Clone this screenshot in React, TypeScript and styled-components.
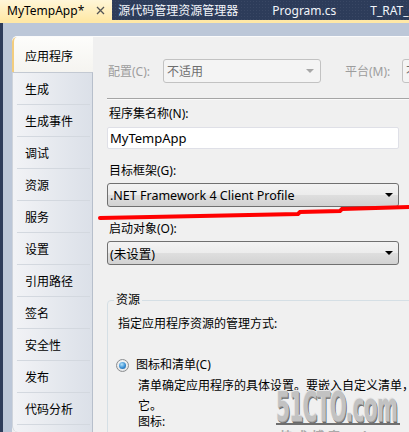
import React from 'react';
import styled, { createGlobalStyle } from 'styled-components';

const GlobalStyle = createGlobalStyle`
  html, body {
    margin: 0;
    padding: 0;
  }

  body {
    width: 409px;
    height: 432px;
    overflow: hidden;
    background: #bcc7d8;
    font-family: "Noto Sans", "Noto Sans CJK SC", sans-serif;
    font-size: 12px;
    color: #000;
  }
`;

const Window = styled.div`
  position: relative;
  display: flex;
  flex-direction: column;
  width: 409px;
  height: 432px;
  overflow: hidden;
  background: #bcc7d8;
`;

const TabBar = styled.div`
  display: flex;
  flex-shrink: 0;
  height: 20px;
  background-color: #2d3c5a;
  background-image: radial-gradient(rgba(255, 255, 255, 0.06) 1px, transparent 1px);
  background-size: 3px 3px;
`;

const DocTab = styled.div<{ $active?: boolean }>`
  display: flex;
  align-items: center;
  gap: 12px;
  height: 20px;
  padding: ${(p) => (p.$active ? '0 7px 0 7px' : '0 28px 0 6px')};
  white-space: nowrap;
  color: ${(p) => (p.$active ? '#000' : '#f2f5fa')};
  background: ${(p) =>
    p.$active ? 'linear-gradient(#fff6d8, #ffe9a8)' : 'transparent'};
`;

const ActiveStrip = styled.div`
  flex-shrink: 0;
  height: 3px;
  background: #ffe8a6;
`;

const Well = styled.div`
  display: flex;
  flex: 1;
  min-height: 0;
`;

const WellEdge = styled.div`
  width: 3px;
  flex-shrink: 0;
  background: #2d3c5a;
`;

const Page = styled.div`
  display: flex;
  flex: 1;
  min-width: 0;
  margin: 13px 0 0 9px;
  background: #f0f0f0;
  border-top: 1px solid #fbfbfb;
  border-top-left-radius: 5px;
  overflow: hidden;
`;

const Sidebar = styled.nav`
  display: flex;
  flex-direction: column;
  flex-shrink: 0;
  width: 81px;
`;

const ActiveSideTab = styled.div`
  display: flex;
  align-items: center;
  height: 35px;
  padding: 3px 0 0 11px;
  box-sizing: border-box;
  background: linear-gradient(#fdfdfb, #f5f4f0);
  border-left: 2px solid #f3cd7e;
  border-top-left-radius: 5px;
`;

const SideList = styled.div`
  display: flex;
  flex-direction: column;
  flex: 1;
  background: linear-gradient(to right, #f2f3f6, #dbe0e8);
  border-top: 1px solid #c3c9d2;
  border-left: 1px solid #cfd4dc;
  border-right: 1px solid #b7bfcb;
  border-bottom-left-radius: 6px;
`;

const SideItem = styled.div`
  position: relative;
  display: flex;
  align-items: center;
  flex-shrink: 0;
  height: 32px;
  padding-left: 12px;

  &::after {
    content: '';
    position: absolute;
    left: 4px;
    right: 2px;
    bottom: 0;
    height: 1px;
    background: #d3d8df;
  }
`;

const Content = styled.main`
  display: flex;
  flex-direction: column;
  flex: 1;
  min-width: 0;
  padding-left: 14px;
  overflow: hidden;
`;

const ConfigRow = styled.div`
  display: flex;
  align-items: center;
  flex-shrink: 0;
  margin-top: 22px;
  height: 24px;
  white-space: nowrap;
`;

const DimLabel = styled.span<{ $width: number }>`
  flex-shrink: 0;
  width: ${(p) => p.$width}px;
  padding-left: 1px;
  box-sizing: border-box;
  color: #9d9d9d;
`;

const DisabledCombo = styled.div`
  display: flex;
  align-items: center;
  justify-content: space-between;
  flex-shrink: 0;
  width: 158px;
  height: 24px;
  padding: 0 6px 0 3px;
  box-sizing: border-box;
  margin-right: 23px;
  color: #6d6d6d;
  background: #f4f4f4;
  border: 1px solid #c2c2c2;
  border-radius: 3px;
`;

const Divider = styled.hr`
  flex-shrink: 0;
  width: 100%;
  height: 0;
  margin: 15px 0 0;
  border: none;
  border-top: 1px solid #a5a5a5;
  border-bottom: 1px solid #fafafa;
`;

const FieldLabel = styled.div<{ $top: number }>`
  flex-shrink: 0;
  height: 16px;
  line-height: 16px;
  margin: ${(p) => p.$top}px 0 4px 2px;
`;

const TextBox = styled.div`
  display: flex;
  align-items: center;
  flex-shrink: 0;
  width: 292px;
  height: 22px;
  margin-top: 1px;
  padding-left: 2px;
  box-sizing: border-box;
  font-size: 13px;
  background: #fff;
  border: 1px solid #dfe0e7;
  border-radius: 2px;
`;

const Combo = styled.div`
  display: flex;
  align-items: center;
  justify-content: space-between;
  flex-shrink: 0;
  width: 292px;
  height: 24px;
  padding: 0 5px 0 2px;
  box-sizing: border-box;
  font-size: 12.5px;
  background: linear-gradient(#f3f3f3 0%, #ececec 48%, #dedede 52%, #d2d2d2 100%);
  border: 1px solid #707070;
  border-radius: 3px;
`;

const Arrow = styled.span<{ $dim?: boolean }>`
  width: 0;
  height: 0;
  border-left: 4px solid transparent;
  border-right: 4px solid transparent;
  border-top: 4px solid ${(p) => (p.$dim ? '#a7a7a7' : '#000')};
`;

const GroupBox = styled.fieldset`
  flex-shrink: 0;
  width: 430px;
  margin: 27px 0 0;
  padding: 0 0 20px 10px;
  border: 1px solid #d5dfe5;
  border-radius: 4px;
`;

const GroupLegend = styled.legend`
  height: 16px;
  line-height: 16px;
  margin-left: -4px;
  padding: 0 2px;
`;

const GroupText = styled.div`
  margin-top: 8px;
  line-height: 16px;
  white-space: nowrap;
`;

const RadioRow = styled.label`
  display: flex;
  align-items: center;
  gap: 7px;
  margin: 25px 0 0 -2px;
  line-height: 16px;
  white-space: nowrap;
`;

const RadioDot = styled.span`
  display: flex;
  align-items: center;
  justify-content: center;
  width: 11px;
  height: 11px;
  border: 1px solid #8c8e90;
  border-radius: 50%;
  background: radial-gradient(circle at 50% 40%, #ffffff, #d9dcdf);

  &::after {
    content: '';
    width: 7px;
    height: 7px;
    border-radius: 50%;
    background: radial-gradient(circle at 40% 35%, #b5e3fb, #3a8fd3 55%, #17538f);
  }
`;

const Description = styled.div`
  margin: 3px 0 0 20px;
  line-height: 20px;
  white-space: nowrap;
`;

const IconLabel = styled.div`
  margin: -2px 0 0 20px;
  line-height: 16px;
`;

const Scribble = styled.svg`
  position: absolute;
  left: 0;
  top: 0;
  pointer-events: none;
`;

const Watermark = styled.div`
  position: absolute;
  left: 276px;
  top: 392px;
  display: flex;
  flex-direction: column;
  pointer-events: none;
`;

const WatermarkLogo = styled.span`
  display: inline-block;
  height: 31px;
  font-family: "DejaVu Sans Condensed", "DejaVu Sans", sans-serif;
  font-weight: bold;
  font-size: 37px;
  line-height: 31px;
  letter-spacing: -1px;
  color: #c2c2c2;
  text-shadow: -1px -1px 0 #e6e6e6, 1px 1px 0 #9a9a9a, 2px 2px 0 #6a6a6a;
  transform: scale(0.6, 1.08);
  transform-origin: left center;
  white-space: nowrap;
`;

const WatermarkRule = styled.div`
  width: 124px;
  height: 2px;
  background: #6f6f6f;
`;

const WatermarkSub = styled.div`
  margin-top: 2px;
  padding-left: 4px;
  font-size: 12px;
  font-weight: bold;
  letter-spacing: 4px;
  color: #a9a9a9;
  white-space: nowrap;
`;

const sideItems = [
  '生成',
  '生成事件',
  '调试',
  '资源',
  '服务',
  '设置',
  '引用路径',
  '签名',
  '安全性',
  '发布',
  '代码分析',
];

const CloseIcon: React.FC = () => (
  <svg width="9" height="9" viewBox="0 0 9 9">
    <path d="M1 1 L8 8 M8 1 L1 8" stroke="#555" strokeWidth="1.3" />
  </svg>
);

const App: React.FC = () => {
  return (
    <Window>
      <GlobalStyle />
      <TabBar>
        <DocTab $active>
          MyTempApp*
          <CloseIcon />
        </DocTab>
        <DocTab>源代码管理资源管理器</DocTab>
        <DocTab>Program.cs</DocTab>
        <DocTab>T_RAT_Client</DocTab>
      </TabBar>
      <ActiveStrip />
      <Well>
        <WellEdge />
        <Page>
          <Sidebar>
            <ActiveSideTab>应用程序</ActiveSideTab>
            <SideList>
              {sideItems.map((item) => (
                <SideItem key={item}>{item}</SideItem>
              ))}
            </SideList>
          </Sidebar>
          <Content>
            <ConfigRow>
              <DimLabel $width={56}>配置(C):</DimLabel>
              <DisabledCombo>
                不适用
                <Arrow $dim />
              </DisabledCombo>
              <DimLabel $width={58}>平台(M):</DimLabel>
              <DisabledCombo>
                不适用
                <Arrow $dim />
              </DisabledCombo>
            </ConfigRow>
            <Divider />
            <FieldLabel $top={6}>程序集名称(N):</FieldLabel>
            <TextBox>MyTempApp</TextBox>
            <FieldLabel $top={14}>目标框架(G):</FieldLabel>
            <Combo>
              .NET Framework 4 Client Profile
              <Arrow />
            </Combo>
            <FieldLabel $top={14}>启动对象(O):</FieldLabel>
            <Combo>
              (未设置)
              <Arrow />
            </Combo>
            <GroupBox>
              <GroupLegend>资源</GroupLegend>
              <GroupText>指定应用程序资源的管理方式:</GroupText>
              <RadioRow>
                <RadioDot />
                图标和清单(C)
              </RadioRow>
              <Description>
                清单确定应用程序的具体设置。要嵌入自定义清单，请首先将它添加到项目中，然后从以下列表中选择
                <br />
                它。
              </Description>
              <IconLabel>图标:</IconLabel>
            </GroupBox>
          </Content>
        </Page>
      </Well>
      <Scribble width="409" height="432" viewBox="0 0 409 432">
        <path
          d="M100 218 L200 216 L298 214 L300 212 L340 211 L342 209 L409 207"
          fill="none"
          stroke="#ff0000"
          strokeWidth="4"
          strokeLinecap="round"
        />
      </Scribble>
      <Watermark>
        <WatermarkLogo>51CTO.com</WatermarkLogo>
        <WatermarkRule />
        <WatermarkSub>技术博客 Blog</WatermarkSub>
      </Watermark>
    </Window>
  );
};

export default App;
